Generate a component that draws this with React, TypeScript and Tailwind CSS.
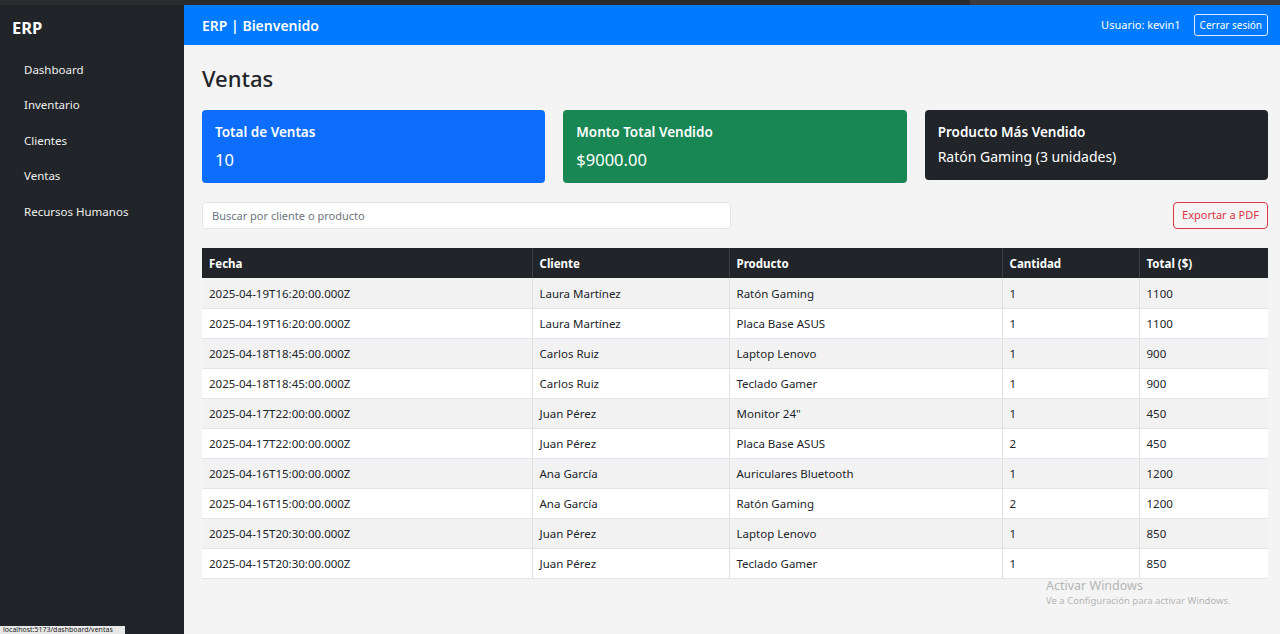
import React from "react";

const rows = [
  ["2025-04-19T16:20:00.000Z", "Laura Martínez", "Ratón Gaming", "1", "1100"],
  ["2025-04-19T16:20:00.000Z", "Laura Martínez", "Placa Base ASUS", "1", "1100"],
  ["2025-04-18T18:45:00.000Z", "Carlos Ruiz", "Laptop Lenovo", "1", "900"],
  ["2025-04-18T18:45:00.000Z", "Carlos Ruiz", "Teclado Gamer", "1", "900"],
  ["2025-04-17T22:00:00.000Z", "Juan Pérez", "Monitor 24\"", "1", "450"],
  ["2025-04-17T22:00:00.000Z", "Juan Pérez", "Placa Base ASUS", "2", "450"],
  ["2025-04-16T15:00:00.000Z", "Ana García", "Auriculares Bluetooth", "1", "1200"],
  ["2025-04-16T15:00:00.000Z", "Ana García", "Ratón Gaming", "2", "1200"],
  ["2025-04-15T20:30:00.000Z", "Juan Pérez", "Laptop Lenovo", "1", "850"],
  ["2025-04-15T20:30:00.000Z", "Juan Pérez", "Teclado Gamer", "1", "850"],
];

const nav = ["Dashboard", "Inventario", "Clientes", "Ventas", "Recursos Humanos"];

export default function App() {
  return (
    <div
      className="relative w-[1280px] h-[634px] overflow-hidden flex flex-col bg-[#f4f4f4] text-[#212529]"
      style={{ fontFamily: '"Noto Sans", "Open Sans", sans-serif' }}
    >
      <div className="h-[5px] w-full flex shrink-0">
        <div className="w-[970px] bg-[#2a2b2e]" />
        <div className="flex-1 bg-[#3b3b3d]" />
      </div>
      <div className="flex flex-1 min-h-0">
        <aside className="w-[184px] shrink-0 bg-[#212529] text-white flex flex-col">
          <div className="h-[46px] flex items-center pl-[12px] text-[16.5px] font-bold">ERP</div>
          <nav className="flex flex-col pt-[1px]">
            {nav.map((n) => (
              <div key={n} className="h-[35.4px] flex items-center pl-[24px] text-[11.5px] text-[#f0f0f0]">
                {n}
              </div>
            ))}
          </nav>
        </aside>
        <div className="flex-1 flex flex-col min-w-0">
          <header className="h-[40px] shrink-0 bg-[#007bff] flex items-center justify-between pl-[18px] pr-[12px] text-white">
            <div className="text-[14px] font-semibold">ERP | Bienvenido</div>
            <div className="flex items-center gap-[13px]">
              <span className="text-[11px]">Usuario: kevin1</span>
              <button className="h-[22px] px-[5px] border border-[#dfe9ff] rounded-[3px] text-[10px] leading-none">
                Cerrar sesión
              </button>
            </div>
          </header>
          <main className="flex-1 pl-[18px] pr-[12px]">
            <h1 className="text-[22px] font-medium mt-[17px] leading-[32px]">Ventas</h1>
            <div className="grid grid-cols-3 gap-[18px] mt-[16px] items-start">
              <div className="h-[73px] rounded-[4px] bg-[#0d6efd] text-white pl-[13px] pt-[12px]">
                <div className="text-[13.5px] font-semibold leading-[20px]">Total de Ventas</div>
                <div className="text-[16.5px] mt-[6px] leading-[24px]">10</div>
              </div>
              <div className="h-[73px] rounded-[4px] bg-[#198754] text-white pl-[13px] pt-[12px]">
                <div className="text-[13.5px] font-semibold leading-[20px]">Monto Total Vendido</div>
                <div className="text-[16.5px] mt-[6px] leading-[24px]">$9000.00</div>
              </div>
              <div className="h-[70px] rounded-[4px] bg-[#212529] text-white pl-[13px] pt-[12px]">
                <div className="text-[13.5px] font-semibold leading-[20px]">Producto Más Vendido</div>
                <div className="text-[14px] mt-[4px] leading-[22px]">Ratón Gaming (3 unidades)</div>
              </div>
            </div>
            <div className="flex justify-between items-center mt-[19px]">
              <div className="w-[529px] h-[27px] bg-white border border-[#e3e5e8] rounded-[4px] flex items-center pl-[9px] pt-[1px] text-[11px] text-[#6c757d]">
                Buscar por cliente o producto
              </div>
              <button className="w-[95px] h-[27px] border border-[#dc3545] rounded-[4px] text-[11px] text-[#dc3545] bg-transparent">
                Exportar a PDF
              </button>
            </div>
            <table className="w-full table-fixed border-collapse mt-[19px] text-[11.5px]">
              <colgroup>
                <col className="w-[330px]" />
                <col className="w-[197px]" />
                <col className="w-[273px]" />
                <col className="w-[137px]" />
                <col />
              </colgroup>
              <thead>
                <tr className="bg-[#212529] text-white h-[30px]">
                  {["Fecha", "Cliente", "Producto", "Cantidad", "Total ($)"].map((h, i) => (
                    <th
                      key={h}
                      className={`text-left font-bold pl-[7px] pt-[2px] border-[#3a3f44] ${i > 0 ? "border-l" : ""}`}
                    >
                      {h}
                    </th>
                  ))}
                </tr>
              </thead>
              <tbody>
                {rows.map((r, idx) => (
                  <tr key={idx} className={`h-[30px] border-b border-[#e3e5e8] ${idx % 2 === 0 ? "bg-[#f2f2f2]" : "bg-white"}`}>
                    {r.map((c, i) => (
                      <td key={i} className={`pl-[7px] pt-[2px] border-[#dee2e6] ${i > 0 ? "border-l" : ""}`}>
                        {c}
                      </td>
                    ))}
                  </tr>
                ))}
              </tbody>
            </table>
          </main>
        </div>
      </div>
      <div className="absolute left-[1046px] top-[578px] text-[#b5b5b5]">
        <div className="text-[12.5px] leading-[16px]">Activar Windows</div>
        <div className="text-[9.5px] leading-[14px]">Ve a Configuración para activar Windows.</div>
      </div>
      <div className="absolute left-0 bottom-0 h-[8px] w-[125px] bg-[#e8e8e8] text-[7px] leading-[8px] pl-[3px] text-[#222] overflow-hidden">
        localhost:5173/dashboard/ventas
      </div>
    </div>
  );
}
